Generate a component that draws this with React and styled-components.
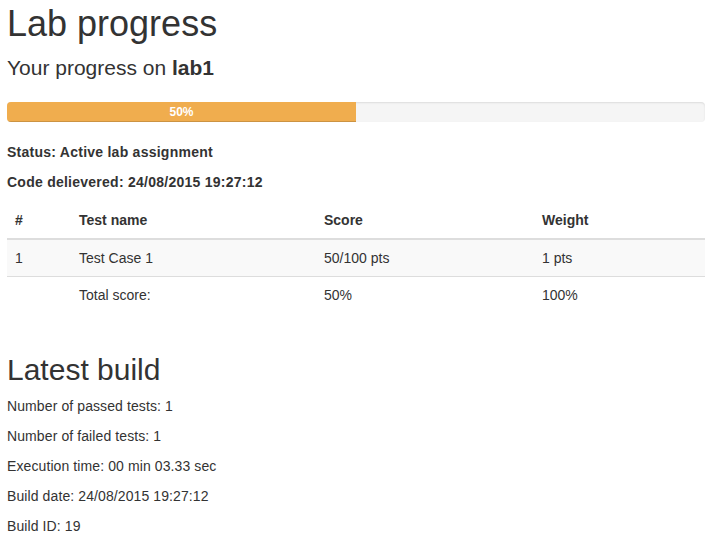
import React from "react";
import styled, { createGlobalStyle } from "styled-components";

const GlobalStyle = createGlobalStyle`
  html, body {
    margin: 0;
    padding: 0;
    background: #fff;
  }
  body {
    font-family: "Liberation Sans", Arial, sans-serif;
    font-size: 14px;
    line-height: 20px;
    color: #333;
  }
  * {
    box-sizing: border-box;
  }
`;

const Page = styled.div`
  width: 698px;
  margin-left: 7px;
  padding-top: 4px;
`;

const Title = styled.h1`
  font-size: 36px;
  font-weight: 400;
  line-height: 1.1;
  margin: 0 0 12px;
`;

const SubTitle = styled.h3`
  font-size: 21px;
  font-weight: 400;
  line-height: 1.1;
  margin: 0 0 23px;

  b {
    font-weight: 700;
  }
`;

const Progress = styled.div`
  height: 20px;
  margin-bottom: 20px;
  overflow: hidden;
  background-color: #f5f5f5;
  border-radius: 4px;
  box-shadow: inset 0 1px 2px rgba(0, 0, 0, 0.1);
  display: flex;
`;

const ProgressBar = styled.div`
  height: 100%;
  background-color: #f0ad4e;
  color: #fff;
  font-size: 12px;
  font-weight: 700;
  line-height: 20px;
  text-align: center;
  box-shadow: inset 0 -1px 0 rgba(0, 0, 0, 0.15);
`;

const Info = styled.p`
  margin: 0 0 10px;
  font-weight: ${(p) => (p.$bold ? 700 : 400)};
  letter-spacing: ${(p) => (p.$bold ? "0.25px" : "0.1px")};
`;

const Section = styled.section`
  padding-bottom: ${(p) => p.$pad || "0"};
`;

const Table = styled.table`
  width: 100%;
  border-collapse: collapse;
  border-spacing: 0;
`;

const Th = styled.th`
  text-align: left;
  font-weight: 700;
  padding: 8px;
  line-height: 20px;
  border-bottom: 2px solid #ddd;
  vertical-align: bottom;
  width: ${(p) => p.$w};
`;

const Row = styled.tr`
  background-color: ${(p) => (p.$striped ? "#f9f9f9" : "transparent")};
`;

const Td = styled.td`
  padding: 8px;
  line-height: 20px;
  border-top: 1px solid #ddd;
  vertical-align: top;
`;

const SectionTitle = styled.h2`
  font-size: 30px;
  font-weight: 400;
  line-height: 1.1;
  margin: 20px 0 10px;
`;

const build = [
  "Number of passed tests: 1",
  "Number of failed tests: 1",
  "Execution time: 00 min 03.33 sec",
  "Build date: 24/08/2015 19:27:12",
  "Build ID: 19",
];

export default function App() {
  const percent = 50;
  return (
    <>
      <GlobalStyle />
      <Page>
        <Section $pad="20px">
          <Title>Lab progress</Title>
          <SubTitle>
            Your progress on <b>lab1</b>
          </SubTitle>
          <Progress>
            <ProgressBar style={{ width: `${percent}%` }}>{percent}%</ProgressBar>
          </Progress>
          <Info $bold>Status: Active lab assignment</Info>
          <Info $bold>Code delievered: 24/08/2015 19:27:12</Info>
          <Table>
            <thead>
              <tr>
                <Th $w="64px">#</Th>
                <Th $w="245px">Test name</Th>
                <Th $w="218px">Score</Th>
                <Th>Weight</Th>
              </tr>
            </thead>
            <tbody>
              <Row $striped>
                <Td>1</Td>
                <Td>Test Case 1</Td>
                <Td>50/100 pts</Td>
                <Td>1 pts</Td>
              </Row>
              <Row>
                <Td></Td>
                <Td>Total score:</Td>
                <Td>50%</Td>
                <Td>100%</Td>
              </Row>
            </tbody>
          </Table>
        </Section>
        <Section>
          <SectionTitle>Latest build</SectionTitle>
          {build.map((line) => (
            <Info key={line}>{line}</Info>
          ))}
        </Section>
      </Page>
    </>
  );
}
